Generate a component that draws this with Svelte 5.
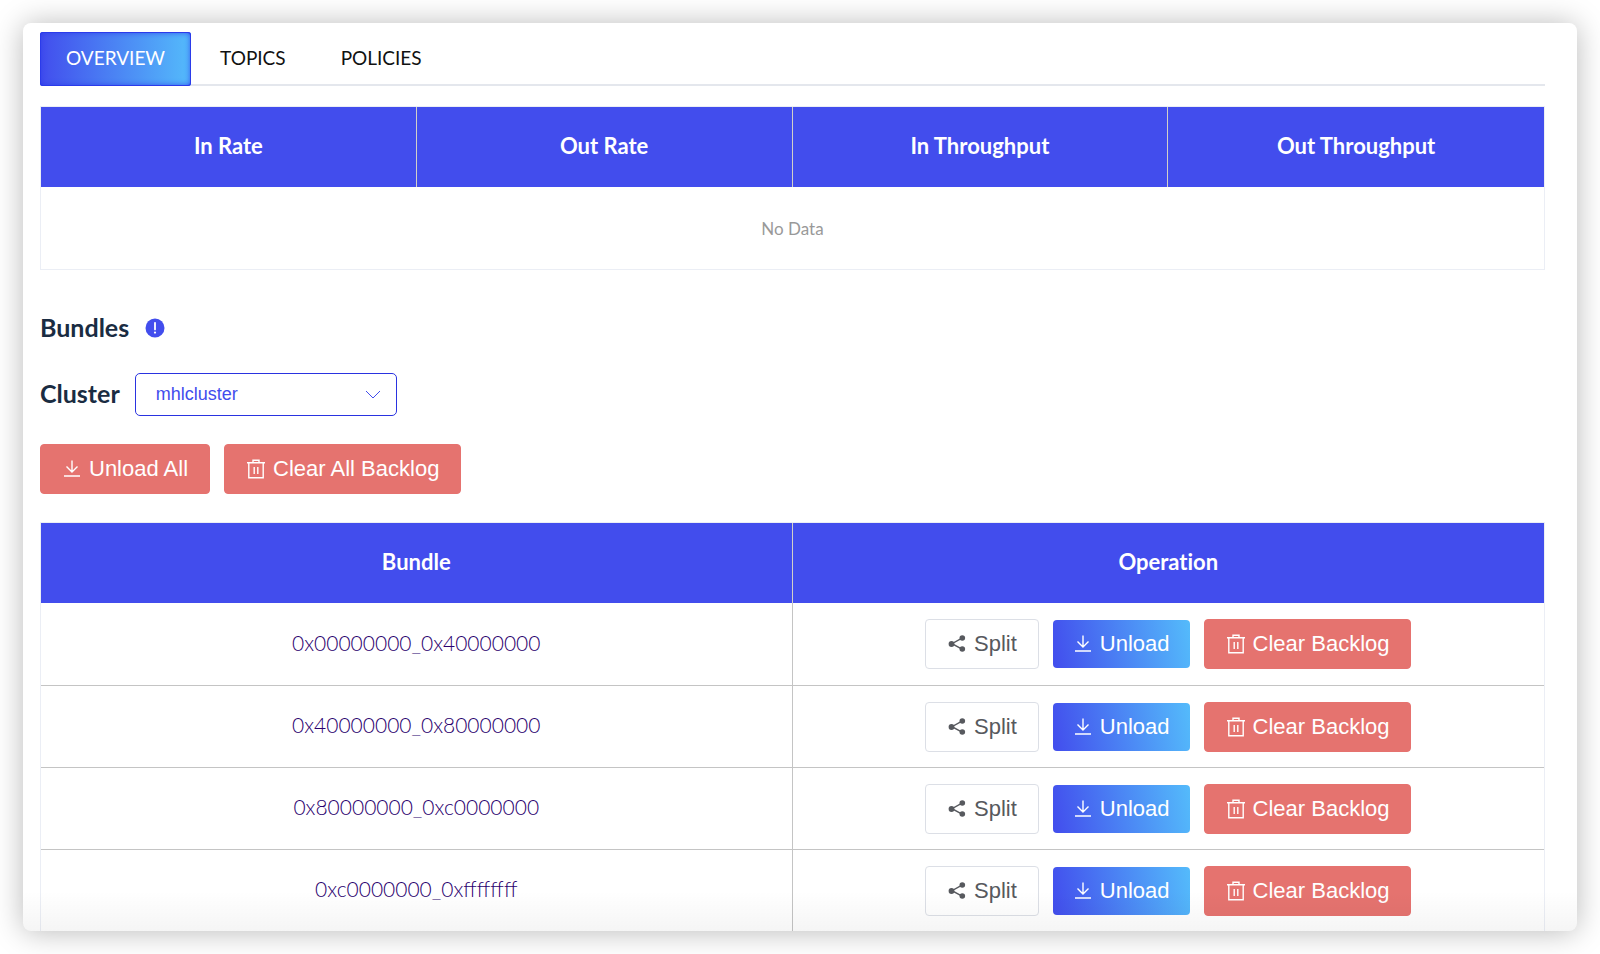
<script lang="ts">
  const tabs = ['Overview', 'Topics', 'Policies'];
  const rateColumns = ['In Rate', 'Out Rate', 'In Throughput', 'Out Throughput'];
  const bundles = [
    '0x00000000_0x40000000',
    '0x40000000_0x80000000',
    '0x80000000_0xc0000000',
    '0xc0000000_0xffffffff',
  ];

  let activeTab = $state('Overview');
  let cluster = $state('mhlcluster');
</script>

{#snippet downloadIcon()}
  <svg class="icon" viewBox="0 0 20 20" aria-hidden="true">
    <path d="M10 1.5V13M4.5 7.5L10 13l5.5-5.5M2 17h16" />
  </svg>
{/snippet}

{#snippet trashIcon()}
  <svg class="icon" viewBox="0 0 20 20" aria-hidden="true">
    <path d="M1 3.7h18M2.8 3.7v15h14.4v-15M7 3.7V1.2h6v2.5M8.2 8v7M11.8 8v7" />
  </svg>
{/snippet}

{#snippet shareIcon()}
  <svg class="icon" viewBox="0 0 20 20" aria-hidden="true">
    <path d="M15 4.2L5 9.7l10 5.5" />
    <g fill="currentColor" stroke="none">
      <circle cx="4.5" cy="10" r="2.9" />
      <circle cx="15.3" cy="4" r="2.8" />
      <circle cx="15.3" cy="15" r="2.8" />
    </g>
  </svg>
{/snippet}

<main class="card">
  <div class="tabs" role="tablist">
    {#each tabs as tab}
      <button
        class="tab"
        class:active={activeTab === tab}
        role="tab"
        type="button"
        aria-selected={activeTab === tab}
        onclick={() => (activeTab = tab)}
      >{tab}</button>
    {/each}
  </div>

  <table class="rates">
    <thead>
      <tr>
        {#each rateColumns as column}
          <th>{column}</th>
        {/each}
      </tr>
    </thead>
    <tbody>
      <tr>
        <td class="empty" colspan="4">No Data</td>
      </tr>
    </tbody>
  </table>

  <h3 class="heading">
    <span>Bundles</span>
    <svg class="info" viewBox="0 0 20 20" aria-hidden="true">
      <circle cx="10" cy="10" r="9.5" fill="#424ded" />
      <path d="M10 4.8v6.6" stroke="#fff" stroke-width="1.8" stroke-linecap="round" />
      <circle cx="10" cy="14.6" r="1.1" fill="#fff" />
    </svg>
  </h3>

  <div class="cluster">
    <label for="cluster">Cluster</label>
    <div class="select">
      <select id="cluster" bind:value={cluster}>
        <option>mhlcluster</option>
      </select>
      <svg class="chevron" viewBox="0 0 16 10" aria-hidden="true">
        <path d="M1 1l7 7 7-7" />
      </svg>
    </div>
  </div>

  <div class="actions">
    <button class="btn danger" type="button">{@render downloadIcon()}Unload All</button>
    <button class="btn danger" type="button">{@render trashIcon()}Clear All Backlog</button>
  </div>

  <table class="bundles">
    <thead>
      <tr>
        <th>Bundle</th>
        <th>Operation</th>
      </tr>
    </thead>
    <tbody>
      {#each bundles as bundle}
        <tr>
          <td class="range">{bundle}</td>
          <td>
            <div class="operations">
              <button class="btn" type="button">{@render shareIcon()}Split</button>
              <button class="btn primary" type="button">{@render downloadIcon()}Unload</button>
              <button class="btn danger" type="button">{@render trashIcon()}Clear Backlog</button>
            </div>
          </td>
        </tr>
      {/each}
    </tbody>
  </table>
</main>

<style>
  :global(body) {
    background: #fff;
  }

  .card {
    position: relative;
    margin: 23px;
    padding: 9px 32px 0 17px;
    border-radius: 8px;
    overflow: hidden;
    background: #fff;
    box-shadow: 0 1px 30px rgba(0, 0, 0, 0.28);
    font-family: Lato, 'Open Sans', sans-serif;
    color: #1a2c42;
  }

  .card::after {
    content: '';
    position: absolute;
    inset: auto 0 0;
    height: 40px;
    background: linear-gradient(rgba(0, 0, 0, 0), rgba(0, 0, 0, 0.04));
    pointer-events: none;
  }

  .tabs {
    display: flex;
    gap: 3px;
    height: 54px;
    box-shadow: inset 0 -2px #e4e7ed;
  }

  .tab {
    padding: 0 26px 4px;
    border: 0;
    background: none;
    font-family: inherit;
    font-size: 19px;
    text-transform: uppercase;
    color: #111;
    cursor: pointer;
  }

  .tab.active {
    border-radius: 3px;
    background: linear-gradient(90deg, #424ded, #54bbfb);
    box-shadow: inset 0 0 0 1px #2b3bea, inset 0 0 6px #2b3bea;
    color: #fff;
  }

  table {
    width: 100%;
    table-layout: fixed;
    border: 1px solid #ebeef5;
    border-collapse: separate;
    border-spacing: 0;
  }

  th,
  td {
    box-sizing: border-box;
    padding: 0;
    text-align: center;
  }

  th {
    height: 80px;
    padding-bottom: 4px;
    background: #424ded;
    font-size: 22px;
    font-weight: 700;
    font-variant-ligatures: none;
    color: #fff;
  }

  td {
    height: 82px;
  }

  th:not(:last-child) {
    border-right: 1px solid #d2d0c8;
  }

  .rates {
    margin-top: 20px;
  }

  .empty {
    font-size: 17px;
    color: #999;
  }

  .heading {
    display: flex;
    align-items: center;
    gap: 16px;
    height: 34px;
    margin: 41px 0 28px;
    font-size: 25px;
    font-weight: 700;
  }

  .heading span,
  .cluster label {
    padding-bottom: 3px;
  }

  .info {
    width: 20px;
    height: 20px;
  }

  .cluster {
    display: flex;
    align-items: center;
    gap: 15px;
    margin-bottom: 28px;
  }

  .cluster label {
    font-size: 25px;
    font-weight: 700;
  }

  .select {
    position: relative;
    width: 262px;
  }

  select {
    display: block;
    width: 100%;
    height: 43px;
    padding: 0 44px 2px 20px;
    appearance: none;
    border: 1px solid #2a33e0;
    border-radius: 5px;
    background: #fff;
    font-family: 'Liberation Sans', Arial, sans-serif;
    font-size: 18px;
    color: #424ded;
  }

  .chevron {
    position: absolute;
    top: 17px;
    right: 16px;
    width: 16px;
    height: 10px;
    fill: none;
    stroke: #424ded;
    pointer-events: none;
  }

  .actions,
  .operations {
    display: flex;
    align-items: center;
    gap: 14px;
  }

  .actions {
    margin-bottom: 28px;
  }

  .operations {
    justify-content: center;
  }

  .btn {
    display: inline-flex;
    align-items: center;
    gap: 7px;
    height: 50px;
    padding: 0 21px;
    border: 1px solid #dcdfe6;
    border-radius: 4px;
    background: #fff;
    font-family: 'Liberation Sans', Arial, sans-serif;
    font-size: 22px;
    color: #57595e;
    cursor: pointer;
  }

  .danger {
    border-color: #e6726f;
    background: #e5736f;
    color: #fff;
  }

  .primary {
    height: 48px;
    padding: 0 20px;
    border: 0;
    background: linear-gradient(80deg, #424ded, #54bbfb);
    color: #fff;
  }

  .icon {
    flex: none;
    width: 20px;
    height: 20px;
    fill: none;
    stroke: currentColor;
    stroke-width: 1.4;
  }

  .bundles {
    border-bottom: 0;
  }

  .bundles td:first-child {
    border-right: 1px solid #c4c4c4;
  }

  .bundles tr + tr td {
    border-top: 1px solid #c4c4c4;
  }

  .range {
    padding-bottom: 4px;
    font-size: 21px;
    font-weight: 300;
    color: #2a006e;
  }
</style>
